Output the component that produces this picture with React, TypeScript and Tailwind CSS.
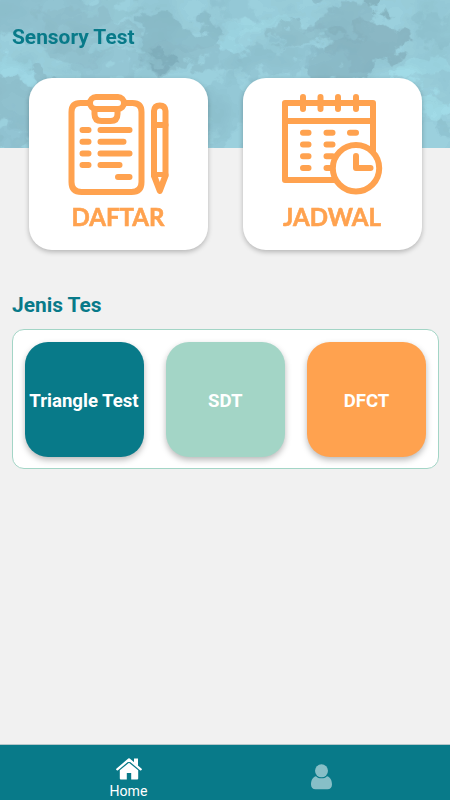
import React from 'react';

type Patch = [number, number, number, number, string, number];

const patches: Patch[] = [
  [40, 14, 75, 28, '#8fbfcd', 0.7],
  [85, 35, 50, 26, '#8ebdca', 0.6],
  [115, 6, 30, 9, '#94c6d3', 0.9],
  [170, 36, 42, 24, '#8abac8', 0.8],
  [185, 58, 46, 12, '#8bbac8', 0.7],
  [25, 104, 46, 30, '#8dbdcb', 0.8],
  [110, 66, 46, 11, '#8fc0ce', 0.6],
  [8, 135, 20, 12, '#8fbfce', 0.7],
  [298, 34, 32, 14, '#8ebecb', 0.8],
  [338, 20, 36, 18, '#8bb9c7', 0.8],
  [368, 46, 36, 20, '#87b3c0', 0.85],
  [340, 64, 34, 14, '#88b6c4', 0.8],
  [370, 0, 16, 7, '#7ea8b4', 0.7],
  [260, 62, 55, 14, '#90c2d0', 0.7],
  [230, 5, 26, 9, '#92c5d3', 0.7],
  [222, 110, 20, 34, '#92c5d3', 0.7],
  [438, 30, 28, 14, '#92c4d1', 0.7],
  [440, 128, 12, 14, '#8fc2d0', 0.7],
  [161, 59, 14, 5, '#7aa8b6', 0.7],
  [118, 40, 20, 9, '#9dd5e3', 0.6],
  [12, 68, 26, 11, '#9fd8e6', 0.8],
  [266, 23, 26, 12, '#9fd7e4', 0.8],
  [232, 38, 14, 16, '#9ed6e4', 0.8],
  [425, 70, 28, 15, '#a2dbe8', 0.9],
  [438, 106, 16, 12, '#a2dbe8', 0.9],
];

function Watercolour() {
  return (
    <svg className="absolute inset-0" width="450" height="148" viewBox="0 0 450 148" aria-hidden="true">
      <defs>
        <filter id="edges" x="-10%" y="-20%" width="120%" height="140%" colorInterpolationFilters="sRGB">
          <feTurbulence type="fractalNoise" baseFrequency="0.04 0.045" numOctaves="4" seed="8" result="n" />
          <feGaussianBlur in="SourceGraphic" stdDeviation="1.2" result="soft" />
          <feDisplacementMap in="soft" in2="n" scale="58" xChannelSelector="R" yChannelSelector="G" />
        </filter>
        <filter id="wash" x="0" y="0" width="100%" height="100%" colorInterpolationFilters="sRGB">
          <feTurbulence type="fractalNoise" baseFrequency="0.022 0.03" numOctaves="4" seed="4" />
          <feColorMatrix values="0 0 0 0 0.49  0 0 0 0 0.68  0 0 0 0 0.73  2 0 0 0 -0.7" />
          <feComponentTransfer>
            <feFuncA type="discrete" tableValues="0 0.06 0.11 0.16 0.21 0.25 0.29 0.33" />
          </feComponentTransfer>
          <feGaussianBlur stdDeviation="0.5" />
        </filter>
      </defs>
      <rect width="450" height="148" fill="#9bd0dd" />
      <g filter="url(#edges)">
        {patches.map(([x, y, rx, ry, fill, o], i) => (
          <ellipse key={i} cx={x} cy={y} rx={rx} ry={ry} fill={fill} opacity={o} />
        ))}
      </g>
      <rect width="450" height="148" filter="url(#wash)" />
    </svg>
  );
}

function ClipboardIcon() {
  return (
    <svg width="102" height="102" viewBox="-0.5 0 102 102" fill="none" stroke="#ffa24f" strokeWidth="6" strokeLinecap="round" strokeLinejoin="round">
      <path d="M20 9H13Q4 9 4 18V88Q4 98 14 98H64Q74 98 74 88V18Q74 9 65 9H58" />
      <rect x="22.5" y="3" width="34" height="12" rx="6" />
      <path d="M27 16V20Q27 27 34 27H43Q50 27 50 20V16" />
      <path d="M15 36H21M33 36H62M15 47.7H21M33 47.7H56M15 59.5H21M33 59.5H62M15 71H21M33 71H52M50.5 83H62" />
      <path d="M86.5 82V17Q87 11.5 92.3 11.5T98 17V82L92.3 97Z" />
      <path d="M86.5 31H98M86.5 81H98M89.5 84L92.3 94L95 84" />
      <path d="M90.5 83H94.1L92.3 88Z" fill="white" stroke="none" />
    </svg>
  );
}

function CalendarIcon() {
  return (
    <svg width="102" height="102" viewBox="0 0 102 102" fill="none" stroke="#ffa24f" strokeWidth="6" strokeLinecap="round" strokeLinejoin="round">
      <path d="M4 9H92V86H4ZM4 27H92" />
      <path d="M22 3V15M39.5 3V15M57 3V15M75 3V15" />
      <path d="M22 38.7H27.5M45.5 38.7H51.5M69 38.7H75M22 50.5H27.5M45.5 50.5H51.5M22 62.2H27.5M45.5 62.2H51.5M22 74H27.5M45.5 74H51.5" />
      <circle cx="75" cy="74.2" r="23.2" fill="white" />
      <path d="M75 62V74H89.5" />
    </svg>
  );
}

function HomeIcon() {
  return (
    <svg width="26" height="22" viewBox="0 0 26 22" aria-hidden="true">
      <path d="M1.3 11.3L13 1.5L24.7 11.3" fill="none" stroke="white" strokeWidth="2.3" strokeLinecap="round" strokeLinejoin="round" />
      <path d="M18 .4H22V8.2L18 4.8Z" fill="white" />
      <path d="M3.8 12.3L13 4.7L22.2 12.3V20.5Q22.2 21.5 21.2 21.5H15.2V15H10.8V21.5H4.8Q3.8 21.5 3.8 20.5Z" fill="white" />
    </svg>
  );
}

function MenuCard({ label, children }: { label: string; children: React.ReactNode }) {
  return (
    <button className="flex h-[172px] w-[179px] flex-col items-center rounded-[23px] bg-white pt-[16px] shadow-[0_2px_5px_rgba(0,0,0,0.25)]">
      {children}
      <span className="mt-[8px] font-[Lato,sans-serif] text-[24px] leading-[26px] font-bold whitespace-nowrap text-[#ffa24f] [-webkit-text-stroke:0.6px_#ffa24f]">
        {label}
      </span>
    </button>
  );
}

function TestTile({ label, colour }: { label: string; colour: string }) {
  return (
    <button className={`flex h-[115px] w-[119px] items-center justify-center rounded-[23px] pt-[4px] text-[18.6px] font-bold whitespace-nowrap text-white shadow-[0_3px_6px_rgba(0,0,0,0.28)] ${colour}`}>
      {label}
    </button>
  );
}

export default function App() {
  return (
    <div className="flex h-[800px] w-[450px] flex-col overflow-hidden bg-[#f1f1f1] font-[Roboto,sans-serif]">
      <header className="relative h-[148px] shrink-0">
        <Watercolour />
        <div className="relative">
          <h1 className="h-[78px] pt-[24px] pl-3 text-[20.9px] leading-[26px] font-bold text-[#087a89]">Sensory Test</h1>
          <div className="flex justify-between pr-[28.5px] pl-[28.5px]">
            <MenuCard label="DAFTAR"><ClipboardIcon /></MenuCard>
            <MenuCard label="JADWAL"><CalendarIcon /></MenuCard>
          </div>
        </div>
      </header>
      <main className="flex-1 px-3 pt-[144px]">
        <h2 className="text-[20.9px] leading-[26px] font-bold text-[#087a89]">Jenis Tes</h2>
        <section className="mt-[11px] flex h-[140px] w-[427px] items-start justify-between rounded-[12px] border border-[#a3d5c6] bg-white pt-[12px] pr-[12px] pl-[11.5px]">
          <TestTile label="Triangle Test" colour="bg-[#087a89]" />
          <TestTile label="SDT" colour="bg-[#a3d5c6]" />
          <TestTile label="DFCT" colour="bg-[#ffa24f]" />
        </section>
      </main>
      <nav className="flex h-[56px] shrink-0 border-t border-[#b5c7ca] bg-[#087a89]">
        <a className="flex w-[257px] flex-col items-center pt-[13px] text-white">
          <HomeIcon />
          <span className="mt-[3px] text-[14.1px] leading-[16px]">Home</span>
        </a>
        <a className="flex w-[129px] flex-col items-center pt-[19px]">
          <svg width="21" height="26" viewBox="0 0 21 26" fill="#87bfc7">
            <path d="M5 12.2C2 12.7 0 16 0 20.5C0 23.7 1.8 25.3 4.5 25.3H16.5C19.2 25.3 21 23.7 21 20.5C21 16 19 12.7 16 12.2C14.5 13.8 12.7 14.3 10.5 14.3S6.5 13.8 5 12.2Z" />
            <circle cx="10.5" cy="6.8" r="6.5" />
          </svg>
        </a>
      </nav>
    </div>
  );
}
